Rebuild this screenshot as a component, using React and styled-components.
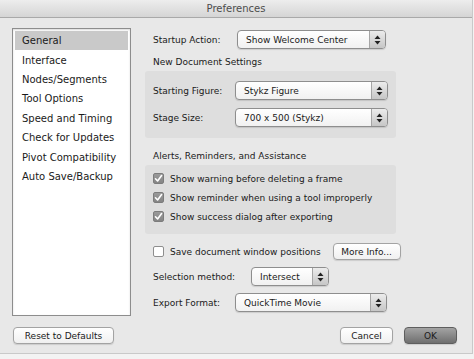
import React from 'react';
import styled, { createGlobalStyle } from 'styled-components';

const GlobalStyle = createGlobalStyle`
  html, body {
    margin: 0;
    padding: 0;
    background: #f3f3f3;
  }
  * {
    box-sizing: border-box;
  }
`;

const sidebarItems = [
  'General',
  'Interface',
  'Nodes/Segments',
  'Tool Options',
  'Speed and Timing',
  'Check for Updates',
  'Pivot Compatibility',
  'Auto Save/Backup',
];

const alerts = [
  'Show warning before deleting a frame',
  'Show reminder when using a tool improperly',
  'Show success dialog after exporting',
];

function Arrows() {
  return (
    <svg width="7" height="10" viewBox="0 0 7 10">
      <path d="M3.5 0.5 L6.5 4 L0.5 4 Z" fill="#222" />
      <path d="M0.5 6 L6.5 6 L3.5 9.5 Z" fill="#222" />
    </svg>
  );
}

function Popup({ width, children }) {
  return (
    <Pop.Wrapper $width={width}>
      <Pop.Text>{children}</Pop.Text>
      <Pop.Stepper>
        <Arrows />
      </Pop.Stepper>
    </Pop.Wrapper>
  );
}

function CheckBox({ checked }) {
  return (
    <Check.Box $checked={checked}>
      {checked && (
        <svg width="9" height="9" viewBox="0 0 9 9">
          <path d="M1.5 4.8 L3.6 7 L7.6 1.6" stroke="#fff" strokeWidth="1.6" fill="none" strokeLinecap="round" strokeLinejoin="round" />
        </svg>
      )}
    </Check.Box>
  );
}

export default function App() {
  return (
    <>
      <GlobalStyle />
      <Window.Frame>
        <Window.TitleBar>Preferences</Window.TitleBar>
        <Window.Body>
          <Sidebar.List>
            {sidebarItems.map((item, i) => (
              <Sidebar.Item key={item} $selected={i === 0}>{item}</Sidebar.Item>
            ))}
          </Sidebar.List>

          <Main.Column>
            <Main.Row $top={2}>
              <Main.Label $width={84}>Startup Action:</Main.Label>
              <Popup width={149}>Show Welcome Center</Popup>
            </Main.Row>

            <Main.Heading $top={7}>New Document Settings</Main.Heading>
            <Main.Group $pad="10px 0 11px" $gap={8}>
              <Main.Row>
                <Main.Label $width={82}>Starting Figure:</Main.Label>
                <Popup width={153}>Stykz Figure</Popup>
              </Main.Row>
              <Main.Row>
                <Main.Label $width={82}>Stage Size:</Main.Label>
                <Popup width={153}>700 x 500 (Stykz)</Popup>
              </Main.Row>
            </Main.Group>

            <Main.Heading $top={12}>Alerts, Reminders, and Assistance</Main.Heading>
            <Main.Group $pad="4px 0 8px" $gap={0}>
              {alerts.map((text) => (
                <Check.Row key={text}>
                  <CheckBox checked />
                  <span>{text}</span>
                </Check.Row>
              ))}
            </Main.Group>

            <Main.Row $top={8}>
              <Check.Row $plain>
                <CheckBox />
                <span>Save document window positions</span>
              </Check.Row>
              <Button.Push $width={68} $left={12}>More Info...</Button.Push>
            </Main.Row>

            <Main.Row $top={6}>
              <Main.Label $width={98}>Selection method:</Main.Label>
              <Popup width={78}>Intersect</Popup>
            </Main.Row>

            <Main.Row $top={7}>
              <Main.Label $width={82}>Export Format:</Main.Label>
              <Popup width={152}>QuickTime Movie</Popup>
            </Main.Row>
          </Main.Column>
        </Window.Body>

        <Window.Footer>
          <Button.Push $width={101}>Reset to Defaults</Button.Push>
          <Window.Actions>
            <Button.Push $width={53}>Cancel</Button.Push>
            <Button.Push $width={53} $default>OK</Button.Push>
          </Window.Actions>
        </Window.Footer>
      </Window.Frame>
    </>
  );
}

const font = `"DejaVu Sans", "Noto Sans", sans-serif`;

const Window = {
  Frame: styled.div`
    width: 473px;
    height: 354px;
    background: #e8e8e8;
    border-right: 1px solid #c9c9c9;
    border-bottom: 1px solid #c9c9c9;
    display: flex;
    flex-direction: column;
    font-family: ${font};
    font-size: 9px;
    color: #1a1a1a;
  `,
  TitleBar: styled.div`
    height: 18px;
    background: linear-gradient(#ededed, #d5d5d5);
    border-bottom: 1px solid #a9a9a9;
    display: flex;
    align-items: center;
    justify-content: center;
    font-size: 10px;
    color: #4c4c4c;
  `,
  Body: styled.div`
    display: flex;
    padding: 10px 0 0 12px;
  `,
  Footer: styled.div`
    display: flex;
    justify-content: space-between;
    align-items: center;
    padding: 11px 15px 0 13px;
  `,
  Actions: styled.div`
    display: flex;
    gap: 11px;
  `,
};

const Sidebar = {
  List: styled.div`
    width: 119px;
    height: 288px;
    background: #fff;
    border: 1px solid #8d8d8d;
    box-shadow: inset 0 1px 2px rgba(0, 0, 0, 0.15);
    padding: 2px;
    display: flex;
    flex-direction: column;
    font-size: 10px;
  `,
  Item: styled.div`
    height: 19.4px;
    display: flex;
    align-items: center;
    padding-left: 7px;
    background: ${(p) => (p.$selected ? '#c9c9c9' : 'transparent')};
    white-space: nowrap;
  `,
};

const Main = {
  Column: styled.div`
    width: 251px;
    margin-left: 14px;
    display: flex;
    flex-direction: column;
  `,
  Row: styled.div`
    display: flex;
    align-items: center;
    height: 19px;
    padding-left: 8px;
    margin-top: ${(p) => p.$top || 0}px;
  `,
  Label: styled.div`
    width: ${(p) => p.$width}px;
    flex: none;
    white-space: nowrap;
  `,
  Heading: styled.div`
    height: 13px;
    line-height: 13px;
    padding-left: 8px;
    margin-top: ${(p) => p.$top}px;
    white-space: nowrap;
  `,
  Group: styled.div`
    background: #dedede;
    border-radius: 3px;
    margin-top: 2px;
    padding: ${(p) => p.$pad};
    display: flex;
    flex-direction: column;
    gap: ${(p) => p.$gap}px;
  `,
};

const Pop = {
  Wrapper: styled.div`
    width: ${(p) => p.$width}px;
    height: 19px;
    flex: none;
    display: flex;
    border: 1px solid #8e8e8e;
    border-radius: 4px;
    background: linear-gradient(#ffffff, #f1f1f1);
    box-shadow: 0 1px 1px rgba(0, 0, 0, 0.12);
    overflow: hidden;
  `,
  Text: styled.div`
    flex: 1;
    display: flex;
    align-items: center;
    padding-left: 8px;
    white-space: nowrap;
  `,
  Stepper: styled.div`
    width: 16px;
    display: flex;
    align-items: center;
    justify-content: center;
    border-left: 1px solid #a5a5a5;
    background: linear-gradient(#ececec, #c6c6c6);
  `,
};

const Check = {
  Row: styled.div`
    display: flex;
    align-items: center;
    gap: 6px;
    height: 19px;
    padding-left: ${(p) => (p.$plain ? 0 : 8)}px;
    white-space: nowrap;
  `,
  Box: styled.div`
    width: 11px;
    height: 11px;
    flex: none;
    border-radius: 2px;
    display: flex;
    align-items: center;
    justify-content: center;
    background: ${(p) => (p.$checked ? 'linear-gradient(#9a9a9a, #858585)' : '#fff')};
    border: 1px solid ${(p) => (p.$checked ? '#7c7c7c' : '#8e8e8e')};
  `,
};

const Button = {
  Push: styled.div`
    width: ${(p) => p.$width}px;
    height: 17px;
    margin-left: ${(p) => p.$left || 0}px;
    flex: none;
    display: flex;
    align-items: center;
    justify-content: center;
    border-radius: 4px;
    border: 1px solid ${(p) => (p.$default ? '#5e5e5e' : '#a3a3a3')};
    background: ${(p) => (p.$default ? 'linear-gradient(#a3a3a3, #6f6f6f)' : 'linear-gradient(#ffffff, #f0f0f0)')};
    box-shadow: 0 1px 1px rgba(0, 0, 0, 0.12);
    white-space: nowrap;
  `,
};
